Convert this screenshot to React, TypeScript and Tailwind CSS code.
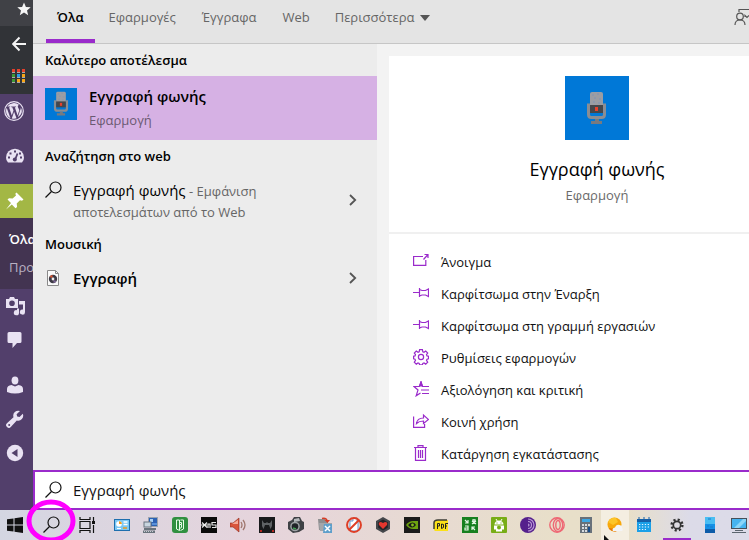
import type { ReactNode } from "react";

const tabs = ["Όλα", "Εφαρμογές", "Έγγραφα", "Web"];

function SearchIcon() {
  return (
    <svg width="18" height="18" viewBox="0 0 18 18" fill="none" stroke="#111" strokeWidth="1.2">
      <circle cx="10.500" cy="6.500" r="5.500" />
      <path d="M6.500 10.500L.5 16.500" />
    </svg>
  );
}

function Chevron() {
  return (
    <svg width="8" height="12" viewBox="0 0 8 12" fill="none" stroke="#555" strokeWidth="1.8">
      <path d="M1 1l5.2 5L1 11" />
    </svg>
  );
}

function Recorder({ className, viewBox = "0 0 64 64" }: { className: string; viewBox?: string }) {
  return (
    <svg className={className} viewBox={viewBox}>
      <rect width="64" height="64" fill="#0078d7" />
      <path d="M25 18q0-2 2-2h9q2 0 2 2v12H25z" fill="#9b9da3" />
      <path d="M27 19h2M32 18h2M29 22h2M34 23h2M28 26h2M33 27h2" stroke="#7f93b5" />
      <path d="M23.500 27.500v11q0 3 3 3h10q3 0 3-3v-11" fill="none" stroke="#8b8d92" strokeWidth="3" />
      <path d="M25 29h13v8H25z" fill="#46474b" />
      <rect x="30" y="31" width="3" height="4" fill="#e8402a" />
      <path d="M30 43h4v2h3v3H26v-3h4z" fill="#777a80" />
    </svg>
  );
}

function Line({ children }: { children: ReactNode }) {
  return (
    <svg width="16" height="16" viewBox="0 0 16 16" fill="none" stroke="#9a2bcb" strokeWidth="1.200">
      {children}
    </svg>
  );
}

const pin = (
  <Line>
    <path d="M0 7.500h6M6.500 3v9M6.500 4.500L9 5.500h3.500l3-1.500v7.500l-3-1.500H9l-2.500 1" />
  </Line>
);

const actions = [
  {
    label: "Άνοιγμα",
    icon: (
      <Line>
        <path d="M10 3.500H.6v8.900h12.200V7M10.500 6.500l4.500-5M11.500 1.500H15V5" />
      </Line>
    ),
  },
  { label: "Καρφίτσωμα στην Έναρξη", icon: pin },
  { label: "Καρφίτσωμα στη γραμμή εργασιών", icon: pin },
  {
    label: "Ρυθμίσεις εφαρμογών",
    icon: (
      <Line>
        <circle cx="8" cy="8" r="2.600" />
        <path d="M6.600.7h2.800l.4 2 1.200.5 1.700-1.200 2 2-1.200 1.700.5 1.200 1.500.3v2.600l-1.500.4-.5 1.200 1.200 1.700-2 2-1.700-1.200-1.200.5-.4 1.500H6.600l-.4-1.500-1.200-.5-1.700 1.200-2-2L2.500 11.400 2 10.200.6 9.800V7.200L2 6.900l.5-1.200L1.300 4l2-2L5 3.200l1.200-.5z" />
      </Line>
    ),
  },
  {
    label: "Αξιολόγηση και κριτική",
    icon: (
      <Line>
        <path d="M16 5.500H9.500L8 1 6.300 5.500H1l4 3.500-1.800 5.800L7.500 12M8 9h8M9 12.500h7" />
        <path d="M8 1l1.300 4H6.700z" fill="#9a2bcb" />
      </Line>
    ),
  },
  {
    label: "Κοινή χρήση",
    icon: (
      <Line>
        <path d="M.6 3.500v10.900h11V11M3.500 10.500C4 6.500 6.500 5 10.500 5V2l5 4.500-5 4V8C7.500 8 5.500 8.500 3.500 10.500z" />
      </Line>
    ),
  },
  {
    label: "Κατάργηση εγκατάστασης",
    icon: (
      <Line>
        <path d="M1 2.500h13M5 2.500V.6h5v1.900M2.500 2.500v12.900h10V2.500M5.500 5v8M7.500 5v8M9.500 5v8" />
      </Line>
    ),
  },
];

function Glyph({ children, size = 20 }: { children: ReactNode; size?: number }) {
  return (
    <svg width={size} height={size} viewBox="0 0 20 20" fill="#e9e2f3">
      {children}
    </svg>
  );
}

function SideButton({ label, className, children }: { label: string; className: string; children: ReactNode }) {
  return (
    <button aria-label={label} className={`flex w-full shrink-0 items-center ${className}`}>
      {children}
    </button>
  );
}

function Sidebar() {
  return (
    <aside className="flex w-[33px] shrink-0 flex-col overflow-hidden bg-[#523f6b]">
      <div className="flex h-[26px] shrink-0 items-start justify-end bg-[#404146] pt-[2px] pr-[2px]">
        <svg width="14" height="14" viewBox="0 0 14 14" fill="#f5f5f5">
          <path d="M7 .5l1.900 4.500 4.800.3-3.700 3.100 1.200 4.800L7 10.600l-4.200 2.600L4 8.400.3 5.300 5.100 5z" />
        </svg>
      </div>
      <div className="flex h-[68px] shrink-0 flex-col items-start gap-[17px] bg-[#313337] pt-[10px] pl-3">
        <svg width="14" height="16" viewBox="0 0 14 16" fill="none" stroke="#f4f4f4" strokeWidth="2">
          <path d="M14 8H1.500M7.500 1.500L1.200 8l6.300 6.500" />
        </svg>
        <svg width="14" height="14" viewBox="0 0 14 14">
          <path d="M0 0h3v3H0zM5 0h3v3H5zM10 0h3v3h-3z" fill="#e2402c" />
          <path d="M0 5h3v3H0zM0 10h3v3H0z" fill="#3c9a35" />
          <path d="M5 5h3v3H5z" fill="#2a9be8" />
          <path d="M10 5h3v3h-3zM5 10h3v3H5zM10 10h3v3h-3z" fill="#f7a515" />
          <path d="M0 3.500h3M5 3.500h3M10 3.500h3M0 8.500h3M5 8.500h3M10 8.500h3M0 13.500h3M5 13.500h3M10 13.500h3" stroke="#aaa" />
        </svg>
      </div>
      <SideButton label="WordPress" className="h-[34px] pl-1">
        <svg width="20" height="20" viewBox="0 0 20 20" fill="#e9e2f3">
          <circle cx="10" cy="10" r="9.300" fill="none" stroke="#e9e2f3" strokeWidth="1.200" />
          <path d="M2 10c0 3.200 1.800 5.900 4.500 7.200L2.700 6.700C2.200 7.700 2 8.800 2 10zm13.300-.4c0-1-.4-1.700-.7-2.200-.4-.7-.8-1.200-.8-1.900 0-.7.600-1.400 1.300-1.400h.1A8 8 0 0 0 3.300 5.600h.5c.8 0 2.100-.1 2.100-.1.400 0 .5.600 0 .7 0 0-.4 0-.9.100l2.800 8.300 1.700-5-1.200-3.300-.8-.1c-.4 0-.4-.7 0-.7 0 0 1.300.1 2.100.1.800 0 2.100-.1 2.100-.1.400 0 .5.600 0 .7l-.9.100 2.800 8.200.8-2.600c.3-1 .9-1.700.9-2.300zm-5.200 1.100l-2.300 6.700c1.600.5 3.200.4 4.700-.1zm6.700-4.300c0 .7-.1 1.500-.5 2.500L13.900 16c4-2.300 4.900-6.400 2.900-9.600z" />
        </svg>
      </SideButton>
      <SideButton label="Πίνακας ελέγχου" className="h-14 pl-[5px]">
        <Glyph>
          <path d="M3 16.500Q1 14.500 1 11.500a9 8.700 0 0 1 18 0q0 3-2 5z" />
          <path d="M10 14l2.500-6.500" stroke="#523f6b" strokeWidth="1.800" />
          <circle cx="9.800" cy="13.500" r="2" fill="#523f6b" />
          <path d="M9 4.500h2v2H9zM4.500 6.500h2v2h-2zM3 10.500h2v2H3zM15 10.500h2v2h-2zM14 6.500h2v2h-2z" fill="#523f6b" />
        </Glyph>
      </SideButton>
      <SideButton label="Άρθρα" className="h-[34px] bg-[#a3b745] pl-[5px]">
        <Glyph>
          <path fill="#fff" d="M11.500 1.500l7 7-1.500 1.300-2-.6-3.300 3.300.4 3.500-1.600 1.200-3.700-3.700L1 18.500l5-6.400-3.500-3.500L4 7.200l3.600.4L11 4.400l-.7-1.700z" />
        </Glyph>
      </SideButton>
      <nav className="flex shrink-0 flex-col bg-[#433451] pt-[7px] pb-2 pl-[9px] text-[13px]">
        <a href="#all" className="h-7 leading-7 font-semibold text-white">Όλα</a>
        <a href="#new" className="h-7 leading-7 text-[#b9b1c2]">Προ</a>
      </nav>
      <SideButton label="Πολυμέσα" className="h-[34px] pl-[5px]">
        <Glyph>
          <path fillRule="evenodd" d="M1 3h3l1-2h4l1 2h3v9H1zM7 4.500a2.800 2.800 0 1 0 0 5.600 2.800 2.800 0 0 0 0-5.600z" />
          <path d="M14 5h6v11a2.600 2.600 0 1 1-2-2.500V8.500h-4z" />
          <path d="M12 12.500h2v4.200a2.600 2.600 0 1 1-2-2.500z" />
        </Glyph>
      </SideButton>
      <SideButton label="Σχόλια" className="h-[34px] pl-[5px]">
        <Glyph>
          <path d="M4 2h11q1.500 0 1.500 1.500v8q0 1.500-1.500 1.500h-3l-4.500 5V13H4q-1.500 0-1.500-1.500v-8Q2.500 2 4 2z" />
        </Glyph>
      </SideButton>
      <SideButton label="Χρήστες" className="mt-[11px] h-[34px] pl-[5px]">
        <Glyph>
          <ellipse cx="10" cy="5.500" rx="3.400" ry="4" />
          <path d="M2 17v-3q0-3.500 4.500-4l3.500 1.500 3.500-1.500q4.500.5 4.500 4v3q-8 3-16 0z" />
        </Glyph>
      </SideButton>
      <SideButton label="Εργαλεία" className="h-[34px] pl-[5px]">
        <Glyph>
          <path d="M17.800 4.800L14.500 8l-2.300-.5-.6-2.300L15 2a5 5 0 0 0-6.500 6.200L2.200 14a2.700 2.700 0 1 0 3.800 3.800l5.800-6.300A5 5 0 0 0 17.800 4.800z" />
          <circle cx="4.200" cy="15.900" r="1" fill="#523f6b" />
        </Glyph>
      </SideButton>
      <SideButton label="Σύμπτυξη μενού" className="h-[34px] pl-[5px]">
        <Glyph>
          <circle cx="10" cy="10" r="8.200" />
          <path d="M12.500 6v8L6.500 10z" fill="#523f6b" />
        </Glyph>
      </SideButton>
    </aside>
  );
}

function Results() {
  return (
    <section className="flex w-[344px] shrink-0 flex-col bg-[#ececec]">
      <h2 className="h-8 pl-3 text-[13px] leading-8 font-semibold text-black">Καλύτερο αποτέλεσμα</h2>
      <button className="flex h-16 items-start gap-3 bg-[#d6b1e4] pt-3 pl-3 text-left">
        <Recorder className="size-8" viewBox="10 11 43 43" />
        <span className="flex flex-col">
          <span className="text-[15px] leading-4 font-semibold text-black">Εγγραφή φωνής</span>
          <span className="pt-1 text-[13px] leading-6 text-[#6b5972]">Εφαρμογή</span>
        </span>
      </button>
      <h2 className="h-8 pl-3 text-[13px] leading-8 font-semibold text-black">Αναζήτηση στο web</h2>
      <button className="flex h-14 items-center pr-5 pl-3 text-left">
        <span className="self-start pt-[9px]"><SearchIcon /></span>
        <span className="flex-1 pt-0.5 pl-[10px] text-[13px] leading-[21px] text-[#666]">
          <span className="text-[15px] text-black">Εγγραφή φωνής</span> - Εμφάνιση
          <br />
          αποτελεσμάτων από το Web
        </span>
        <Chevron />
      </button>
      <h2 className="h-8 pl-3 text-[13px] leading-8 font-semibold text-black">Μουσική</h2>
      <button className="flex h-9 items-center pr-5 pl-3 text-left">
        <svg width="18" height="18" viewBox="0 0 18 18">
          <path d="M2.500 1.500h8l3 3v12h-11z" fill="#fafafa" stroke="#8a8a8a" />
          <path d="M10.500 1.500v3h3" fill="none" stroke="#8a8a8a" />
          <circle cx="8" cy="10" r="4.200" fill="#3d3a45" />
          <path d="M4.500 8a4 4 0 0 1 3-2v3z" fill="#d5532e" />
          <path d="M11.500 12a4 4 0 0 1-3 2v-3z" fill="#7d6794" />
          <circle cx="8" cy="10" r="1.400" fill="#eee" />
        </svg>
        <span className="flex-1 pl-[10px] text-[15px] font-semibold text-black">Εγγραφή</span>
        <Chevron />
      </button>
    </section>
  );
}

function Details() {
  return (
    <section className="flex min-w-0 flex-1 flex-col bg-[#f3f3f3] pt-3 pl-3">
      <div className="flex flex-1 flex-col bg-white">
        <div className="flex h-[178px] flex-col items-center border-b-2 border-[#f0f0f0] pt-5 pl-14">
          <Recorder className="size-16" />
          <h1 className="pt-4 text-[18px] leading-[26px] text-black">Εγγραφή φωνής</h1>
          <p className="text-[13px] leading-[26px] text-[#6a6a6a]">Εφαρμογή</p>
        </div>
        <ul className="pt-3">
          {actions.map((action) => (
            <li key={action.label}>
              <button className="flex h-8 w-full items-center gap-3 pt-0.5 pl-6 text-left text-[13px] text-[#111]">
                <span className="pb-1">{action.icon}</span>
                {action.label}
              </button>
            </li>
          ))}
        </ul>
      </div>
    </section>
  );
}

function Header() {
  return (
    <header className="flex h-11 shrink-0 items-stretch gap-0.5 border-b border-[#c6c6c6] bg-[#e4e4e4] pl-[13px] text-[13px]">
      {tabs.map((tab, i) => (
        <button
          key={tab}
          className={
            i === 0
              ? "border-b-4 border-[#9a2bcb] px-[11px] pb-1 font-semibold text-black"
              : "border-b-4 border-transparent px-3 pb-1 text-[#666]"
          }
        >
          {tab}
        </button>
      ))}
      <button className="flex items-center gap-1.5 pr-3 pl-[11px] pb-2 text-[#666]">
        Περισσότερα
        <svg width="10" height="6" viewBox="0 0 10 6" fill="#555">
          <path d="M0 0h10L5 6z" />
        </svg>
      </button>
      <button aria-label="Σχόλια" className="ml-auto flex shrink-0 items-start overflow-hidden pt-2">
        <svg width="15" height="18" viewBox="0 0 15 18" fill="none" stroke="#555" strokeWidth="1.200">
          <path d="M5 4V1.500h10M11 9V7.500l2 2 2-2" />
          <circle cx="6" cy="8.500" r="3.300" />
          <path d="M1 17q0-5 5-5t5 5" />
        </svg>
      </button>
    </header>
  );
}

function TaskIcon({ children }: { children: ReactNode }) {
  return (
    <svg width="16" height="16" viewBox="0 0 16 16">
      {children}
    </svg>
  );
}

const apps = [
  {
    name: "Πίνακας Ελέγχου",
    icon: (
      <>
        <rect x=".5" y="2.500" width="15" height="11" fill="#7cc8f4" stroke="#1e6fae" />
        <circle cx="5" cy="7" r="2.800" fill="#fff" />
        <path d="M5 4.200A2.800 2.800 0 0 1 7.800 7H5z" fill="#f39c1f" />
        <path d="M9.500 5h4M9.500 7.500h4" stroke="#fff" strokeWidth="1.500" />
        <path d="M3 11.500h4" stroke="#fff" />
        <path d="M9 11h4" stroke="#e69a1f" strokeWidth="1.500" />
      </>
    ),
  },
  {
    name: "Δίκτυο",
    icon: (
      <>
        <rect x="5.500" y=".5" width="9" height="9" fill="#2d62b5" stroke="#9ba3ad" />
        <path d="M7 2h3v3H7z" fill="#a8d0f4" />
        <path d="M9 6h5v2H9z" fill="#5a91d8" />
        <rect x="1" y="5" width="7" height="5" fill="#c9d5df" stroke="#6a7480" />
        <path d="M1 11h12v2H1zM0 13.500h12V16H0z" fill="#69737c" />
        <path d="M1 14.500h9" stroke="#c6cdd2" strokeDasharray="1 1" />
      </>
    ),
  },
  {
    name: "Camtasia",
    icon: (
      <>
        <rect width="16" height="16" rx="3" fill="#309040" />
        <path d="M4.500 3h3v10.500l-3-1.500zM8.500 13.500l3-1.500V3h-3M7.500 5.500h2v2h-2M9.500 7.500v3l-2 1" fill="none" stroke="#e6ffe8" />
      </>
    ),
  },
  {
    name: "XnS",
    icon: (
      <>
        <rect width="16" height="16" fill="#0a0a0a" />
        <path d="M1 5.500l5 5M6 5.500L1 10.500M0 8h6M7 11V7h2v4M15 5.500h-4V8h4v2.500h-4" fill="none" stroke="#e6e6e6" strokeWidth="1.200" />
      </>
    ),
  },
  {
    name: "Ήχος",
    icon: (
      <>
        <path d="M0 6h3l6-5v14L3 10H0z" fill="#d9553c" stroke="#8f2b1f" strokeWidth=".6" />
        <path d="M2 7l6-4v4z" fill="#f5a894" />
        <path d="M11 5q2 3 0 6M13 3q4 5 0 10" fill="none" stroke="#a0766e" strokeWidth="1.300" />
      </>
    ),
  },
  {
    name: "Predator",
    icon: (
      <>
        <rect width="16" height="16" fill="#18191b" />
        <path d="M3 3l2 3h2l1-1 1 1h2l2-3v6l-1.500 3L10 8H6l-1.500 4L3 9z" fill="#5f6265" />
        <path d="M1 14h2M13 14h2" stroke="#e32c25" strokeWidth="1.500" />
      </>
    ),
  },
  {
    name: "Κάμερα",
    icon: (
      <>
        <path d="M0 5l4-2 2-3h6l2 4 2 1v7l-5 3-6 1-5-4z" fill="#3f4145" />
        <path d="M6 2l5-1 1 3-6 1z" fill="#b5b8bb" />
        <circle cx="7" cy="9.500" r="4.800" fill="#9ea2a5" />
        <circle cx="7" cy="9.500" r="3.300" fill="#202327" />
        <path d="M5 11l3 1" stroke="#3f9d52" strokeWidth="1.500" />
      </>
    ),
  },
  {
    name: "Μετατροπή",
    icon: (
      <>
        <path d="M1 2h7l1 2h2v9H2z" fill="#8e8e90" />
        <path d="M2 6h13v8H3z" fill="#a4a6aa" />
        <path d="M7 7h8v9H6z" fill="#5f9fcb" />
        <path d="M8 9l5 5M13 9l-5 5" stroke="#fff" strokeWidth="1.500" />
        <path d="M5 1.500q4-1 5 2" fill="none" stroke="#d63c26" strokeWidth="1.500" />
        <path d="M7.500 3H13l-2.500 3z" fill="#d63c26" />
      </>
    ),
  },
  {
    name: "Αποκλεισμός",
    icon: (
      <>
        <path d="M4 4h3V1h4v3h1v10H4z" fill="#fff" stroke="#6c9dd6" />
        <circle cx="8" cy="8" r="7" fill="none" stroke="#df3e26" strokeWidth="1.900" />
        <path d="M3 13L13 3" stroke="#df3e26" strokeWidth="1.900" />
      </>
    ),
  },
  {
    name: "Game Booster",
    icon: (
      <>
        <path d="M8 0l7 4v8l-7 4-7-4V4z" fill="#45474c" />
        <path d="M8 2.500l4.800 2.700v5.600L8 13.500l-4.800-2.700V5.200z" fill="#232428" />
        <path d="M8 12L4 8q-1-3 2-3l2 1 2-1q3 0 2 3z" fill="#e3372f" />
      </>
    ),
  },
  {
    name: "NVIDIA",
    icon: (
      <>
        <rect width="16" height="16" fill="#1a1a1a" />
        <path d="M2 8q3-4 7-4h5v8H9q-4 0-7-4z" fill="#6da30f" />
        <path d="M4 8q2-2.500 4.500-2.500T12 8q-2 2.500-4 2.500T4 8z" fill="#1a1a1a" />
        <circle cx="8.500" cy="8" r="1.400" fill="#86bf1c" />
      </>
    ),
  },
  {
    name: "PDF",
    icon: (
      <>
        <path d="M1 13V6q0-3 4-3h10v11H2z" fill="#fbe118" />
        <path d="M1 12V6q0-3 4-3h9" fill="none" stroke="#3c3c34" strokeWidth="1.500" />
        <path d="M4.500 12V6.500h2V9h-2M8.500 7v4.500l2-1v-3zM12.500 12V6.500H15M12.500 9H14" fill="none" stroke="#222" />
      </>
    ),
  },
  {
    name: "Μετάφραση",
    icon: (
      <>
        <rect width="16" height="16" fill="#16801f" />
        <path d="M3 3l3 3M6 3v3H3M10 3h4M12 2v5M10 7l4-3M10 4l4 3M13 13l-3-3M10 13v-3h3M3 9h3v4H3v-2h3" fill="none" stroke="#e5f6e5" strokeWidth="1.200" />
      </>
    ),
  },
  {
    name: "Android",
    icon: (
      <>
        <rect width="16" height="16" rx="1" fill="#78ad16" />
        <path d="M3.500 7.500a4.500 4 0 0 1 9 0z" fill="#fff" />
        <path d="M5 2l1.500 2.500M11 2L9.500 4.500" stroke="#fff" />
        <path d="M3 8.500h10v4h-2v2H5v-2H3z" fill="#fff" />
        <circle cx="8" cy="10.500" r="2" fill="#78ad16" />
        <path d="M5.500 6h1M9.500 6h1" stroke="#78ad16" />
      </>
    ),
  },
  {
    name: "Tor",
    icon: (
      <>
        <circle cx="8" cy="8" r="8" fill="#55208c" />
        <path d="M8 2a6 6 0 0 1 0 12M8 4.500a3.500 3.500 0 0 1 0 7M8 7a1 1 0 0 1 0 2" fill="none" stroke="#b998d6" strokeWidth="1.200" />
      </>
    ),
  },
  {
    name: "Opera",
    icon: (
      <g fill="none" stroke="#ee6774" strokeWidth="1.400">
        <circle cx="8" cy="8" r="7.200" />
        <ellipse cx="9" cy="8" rx="4.700" ry="6.500" />
        <ellipse cx="9" cy="8" rx="2.200" ry="4.500" />
      </g>
    ),
  },
  {
    name: "Αριθμομηχανή",
    icon: (
      <>
        <path d="M2 0h12v16H2z" fill="#68717a" />
        <path d="M4 2h8v3H4z" fill="#3ca8e5" />
        <path d="M4 7h2v2H4zM7 7h2v2H7zM10 7h2v2h-2zM4 10h2v2H4zM7 10h2v2H7zM4 13h2v2H4zM7 13h2v2H7z" fill="#d6dbe0" />
        <path d="M10 10h2v5h-2z" fill="#174d8c" />
      </>
    ),
  },
  {
    name: "Καιρός",
    icon: (
      <>
        <circle cx="7.500" cy="7.500" r="7" fill="#f7a80c" />
        <path d="M1 5q3-5 8-4l2 4-5 3z" fill="#fcc52a" />
        <path d="M1.500 11q3 4 8 3.500l-4-3z" fill="#e5760c" />
        <path d="M6 14q-1.500-3 2-3.500 1-3.500 4.500-2.500 3 .5 2.500 3 1.500 1.500 0 3z" fill="#f3f4f6" />
      </>
    ),
  },
  {
    name: "Ημερολόγιο",
    icon: (
      <>
        <path d="M1 2h14v13H1z" fill="#1ba0e8" />
        <path d="M1 2h14v3H1z" fill="#1560a8" />
        <path d="M3 0v3M8 0v3M13 0v3" stroke="#1560a8" />
        <path d="M3 7.500h10M3 10h10M3 12.500h7" stroke="#e4f5ff" strokeWidth="1.200" strokeDasharray="1.300 1.600" />
      </>
    ),
  },
  {
    name: "Ρυθμίσεις",
    icon: (
      <>
        <circle cx="8" cy="8" r="5.400" fill="none" stroke="#333" strokeWidth="2.400" strokeDasharray="2.120 2.120" />
        <circle cx="8" cy="8" r="3.700" fill="none" stroke="#333" strokeWidth="1.700" />
      </>
    ),
  },
  {
    name: "Το τηλέφωνό σας",
    icon: (
      <>
        <path d="M3 0h10v16H3z" fill="#1590e6" />
        <path d="M3 0h10v7H3z" fill="#49bdf2" />
        <path d="M3 12h10v4H3z" fill="#0d5ba8" />
        <path d="M6 2h3M5 9h2M8 10h3" stroke="#1b79c8" />
      </>
    ),
  },
  {
    name: "Αυτός ο υπολογιστής",
    icon: (
      <>
        <rect x=".5" y="1.500" width="15" height="10" fill="#45b3ef" stroke="#46505a" />
        <path d="M3 11L12 2h3v2L8 11z" fill="#8ad5f8" />
        <path d="M4 13.500h8M1 15.500h14" stroke="#5b656e" />
      </>
    ),
  },
];

const spacing: Record<string, string> = {
  Καιρός: "bg-[#f4eee1]",
  Ρυθμίσεις: "ml-1 border-b-2 border-[#9a2bcb] pt-0.5",
  "Το τηλέφωνό σας": "ml-1",
};

function Taskbar() {
  return (
    <footer className="relative flex h-[30px] shrink-0 bg-linear-to-r from-[#d4d6e2] via-[#e6d4dc] via-35% to-[#e8dfc9] to-75%">
      <div className="flex min-w-0 flex-1 gap-px overflow-hidden bg-linear-to-r from-transparent from-84% to-[#dcdbe8] to-92%">
        <button aria-label="Έναρξη" className="flex w-[33px] shrink-0 items-center pl-[7px]">
          <TaskIcon>
            <path d="M0 2.300L6.500 1.400V7.500H0zM7.500 1.300L16 0v7.500H7.500zM0 8.500h6.500v6.100L0 13.700zM7.500 8.500H16V16l-8.500-1.200z" fill="#111" />
          </TaskIcon>
        </button>
        <button aria-label="Αναζήτηση" className="flex w-[34px] shrink-0 items-center pl-[9px]">
          <SearchIcon />
        </button>
        <button aria-label="Προβολή εργασιών" className="flex w-[38px] shrink-0 items-center pl-[10px]">
          <TaskIcon>
            <path d="M1 0v2.500h10V0M1 16v-2.500h10V16M1 4.500h10v7H1zM14.500 0v4M14.500 8v8" fill="none" stroke="#111" strokeWidth="1.200" />
            <path d="M13 4h3v3h-3z" fill="#111" />
          </TaskIcon>
        </button>
        {apps.map((app) => (
          <button
            key={app.name}
            aria-label={app.name}
            className={`flex w-7 shrink-0 items-center justify-center ${spacing[app.name] ?? ""}`}
          >
            <TaskIcon>{app.icon}</TaskIcon>
          </button>
        ))}
      </div>
      <svg className="pointer-events-none absolute bottom-0 left-[26px]" width="50" height="41" viewBox="0 0 50 41" fill="none">
        <ellipse cx="25" cy="22" rx="22" ry="19" stroke="#ff00ff" strokeWidth="5" />
      </svg>
      <svg className="pointer-events-none absolute bottom-0 left-[604px]" width="5" height="5" viewBox="0 0 5 5">
        <path d="M0 0l5 5H0z" fill="#111" />
      </svg>
    </footer>
  );
}

export default function App() {
  return (
    <div className="flex min-h-screen flex-col overflow-hidden font-['Open_Sans','Noto_Sans',sans-serif]">
      <div className="flex flex-1">
        <Sidebar />
        <main className="flex min-w-0 flex-1 flex-col">
          <Header />
          <div className="flex flex-1">
            <Results />
            <Details />
          </div>
          <label className="flex h-10 shrink-0 items-center gap-[10px] border-2 border-r-0 border-[#9a2bcb] bg-white pl-[10px]">
            <SearchIcon />
            <input
              aria-label="Αναζήτηση"
              defaultValue="Εγγραφή φωνής"
              className="min-w-0 flex-1 text-[15px] text-[#111] outline-none"
            />
          </label>
        </main>
      </div>
      <Taskbar />
    </div>
  );
}
